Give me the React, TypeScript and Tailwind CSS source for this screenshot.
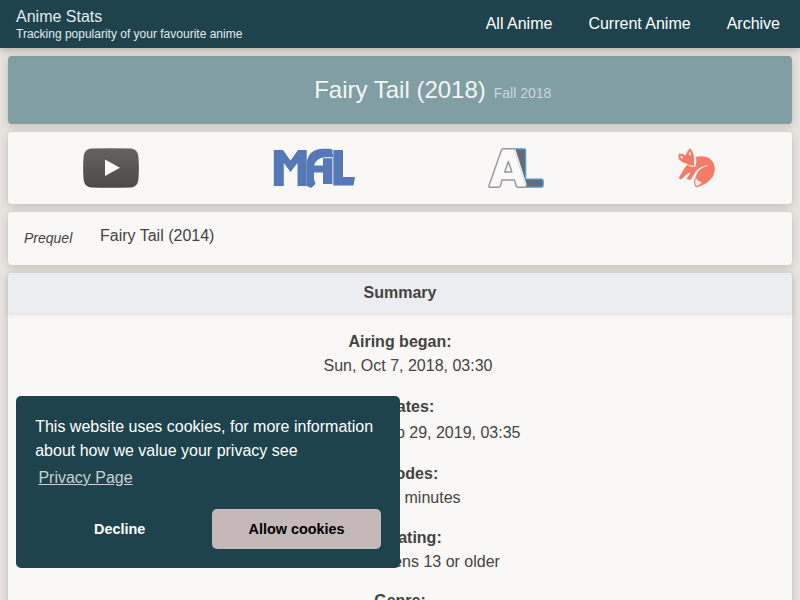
const card = "rounded bg-[#f9f8f6] shadow-[0_2px_8px_rgba(60,50,40,0.22)]";

const facts = [
  { label: "Airing began:", value: "Sun, Oct 7, 2018, 03:30", gap: "", head: "", row: "pl-4 leading-6" },
  { label: "Updates:", value: "Completed Sep 29, 2019, 03:35", gap: "mt-[17px]", head: "", row: "pl-[15px] leading-7" },
  { label: "Episodes:", value: "51x24 minutes", gap: "mt-[15px]", head: "", row: "pl-[17px] leading-6" },
  { label: "Age rating:", value: "PG-13 - Teens 13 or older", gap: "mt-4", head: "pr-px", row: "pl-4 leading-6" },
  { label: "Genre:", value: "Action, Adventure", gap: "mt-[15px]", head: "", row: "pl-4 leading-6" },
];

function YouTubeLogo() {
  return (
    <svg width="56" height="40" viewBox="0 0 56 40">
      <defs>
        <linearGradient id="yt" x1="0" y1="0" x2="0" y2="1">
          <stop offset="0" stopColor="#656361" />
          <stop offset="1" stopColor="#4c4a48" />
        </linearGradient>
      </defs>
      <path d="M8 .5Q28-.2 48 .5Q54.500 1 55.300 8Q56.500 20 55.300 32Q54.500 39 48 39.500Q28 40.200 8 39.500Q1.500 39 .7 32Q-.5 20 .7 8Q1.500 1 8 .5Z" fill="url(#yt)" />
      <path d="M22 11.5V28L37 19.7Z" fill="#f9f8f6" />
    </svg>
  );
}

function MalLogo() {
  return (
    <svg width="82" height="40" viewBox="0 0 82 40" fill="#5579b6">
      <path d="M.8 2H10L17.500 12.500L25 2H33.700V38H24.500V15L17.500 24L10.800 15V38H.8Z" />
      <path d="M33.700 38V14Q36 1 50 .8H57Q60 1 60 4V9.200H52Q43 10 41 17.500H50V10.200H59.400V36H50V24.500H41V31L42.500 36L38 40L33.700 38Z" />
      <path d="M60.300 2H70V29H82L80.500 37.500H60.300Z" />
      <path d="M59.500 3V6" fill="none" stroke="#b9c7e0" strokeWidth=".8" />
    </svg>
  );
}

function AniListLogo() {
  return (
    <svg width="56" height="40" viewBox="0 0 56 40" strokeLinejoin="round">
      <path d="M26 .8H36.700Q37.700 .8 37.700 2V31H53.500Q55.200 31 55.200 33V37.500Q55.200 39.200 53.500 39.200H38Z" fill="#656b78" stroke="#49a5e8" strokeWidth="1.200" />
      <path d="M15 .8H26.500L38.300 38Q38.500 39.200 37 39.200H30Q28.500 39.200 28 37.500L26.500 32H14L12.500 37.500Q12 39.200 10.500 39.200H2Q.5 39.200 1 37.500L13.500 2Q14 .8 15 .8Z M20.300 13.500L16.700 24H23.900Z" fill="#faf9f8" fillRule="evenodd" stroke="#9496a0" strokeWidth="1.400" />
      <path d="M26.800 1.500L38 37" stroke="#eceded" strokeWidth="1.400" />
    </svg>
  );
}

function FoxLogo() {
  return (
    <svg width="38" height="40" viewBox="0 0 38 40">
      <path d="M18 9Q25 7 31 10Q38 15 36.500 24Q34 35 18 39.500Q14 34 17.500 30Q19 23 24 20L31 17Q23 18 18 23L12.500 32L8.500 31L12.500 24.500Q9 25 5 30L2.500 31.500L.8 30L6.500 20L10 16Q15 20 17.500 18.500Q19 14 18 9Z" fill="#f47b66" />
      <path d="M12 .2Q16.500 5 16 12V18Q11 18 7 15Q3 14 .8 11Q0 7 1 5.500Q5 5.500 7.500 7.500Q8.500 3 12 .2Z" fill="#f47b66" />
      <path d="M11.800 3Q13.500 5 13 8L10.500 6.500Z M2 7.500L5.500 9L3.500 11Z M18 30.500Q21 34 24 34.500Q21 37.500 18.300 38Q16 34 18 30.500Z" fill="#fbe9e4" />
      <path d="M16.800 9Q18 14 16.500 18.500Q11 18.500 7.500 15.500" fill="none" stroke="#f9e6e0" strokeWidth=".8" />
    </svg>
  );
}

export default function App() {
  return (
    <div className="h-[600px] overflow-hidden bg-[#e8e4df] font-['Liberation_Sans',sans-serif] text-base text-[#444340]">
      <header className="relative flex h-12 items-center justify-between bg-[#1f434c] pl-4 pr-5 text-white shadow-[0_2px_8px_rgba(60,40,40,0.3)]">
        <div className="pt-0.5 text-[#e2ebef]">
          <div className="leading-[18px]">Anime Stats</div>
          <div className="text-xs leading-4">Tracking popularity of your favourite anime</div>
        </div>
        <nav className="flex gap-9">
          <a>All Anime</a>
          <a>Current Anime</a>
          <a>Archive</a>
        </nav>
      </header>

      <main className="flex flex-col gap-2 p-2">
        <section className="flex h-[68px] items-baseline justify-center gap-2 rounded bg-[#819fa2] pl-[65.5px] pt-[18px] shadow-[0_2px_8px_rgba(60,50,40,0.22)]">
          <h1 className="text-2xl leading-8 text-[#f3f6f6]">Fairy Tail (2018)</h1>
          <span className="text-sm text-[#ccd6de]">Fall 2018</span>
        </section>

        <section className={card + " flex h-[72px] items-center justify-between pl-[75px] pr-[76px]"}>
          <YouTubeLogo />
          <MalLogo />
          <AniListLogo />
          <FoxLogo />
        </section>

        <section className={card + " flex h-[53px] items-start px-4 pt-3"}>
          <span className="w-[76px] pt-1 text-sm leading-5 italic">Prequel</span>
          <span className="leading-6">Fairy Tail (2014)</span>
        </section>

        <section className={card + " text-center"}>
          <h2 className="h-[41px] rounded-t border-b border-[#e2e5ec] bg-[#ecedf1] font-bold leading-10 shadow-[0_1px_4px_rgba(60,50,40,0.1)]">Summary</h2>
          <dl className="pt-4">
            {facts.map((f) => (
              <div key={f.label} className={f.gap}>
                <dt className={"font-bold leading-6 " + f.head}>{f.label}</dt>
                <dd className={f.row}>{f.value}</dd>
              </div>
            ))}
          </dl>
        </section>
      </main>

      <aside className="fixed bottom-8 left-4 h-[172px] w-96 rounded-[5px] bg-[#1f434c] pl-[19.2px] pr-[19px] pt-[19px] text-white">
        <p className="leading-6">This website uses cookies, for more information about how we value your privacy see</p>
        <a className="ml-[3.2px] mt-[3px] block leading-6 text-[#c6d2d5] underline">Privacy Page</a>
        <div className="mt-[19px] flex gap-2 text-[14.4px] font-bold">
          <button className="h-10 flex-1 pt-0.5">Decline</button>
          <button className="h-10 w-[169px] rounded-[5px] bg-[#c5b8b8] pt-0.5 text-black">Allow cookies</button>
        </div>
      </aside>
    </div>
  );
}
